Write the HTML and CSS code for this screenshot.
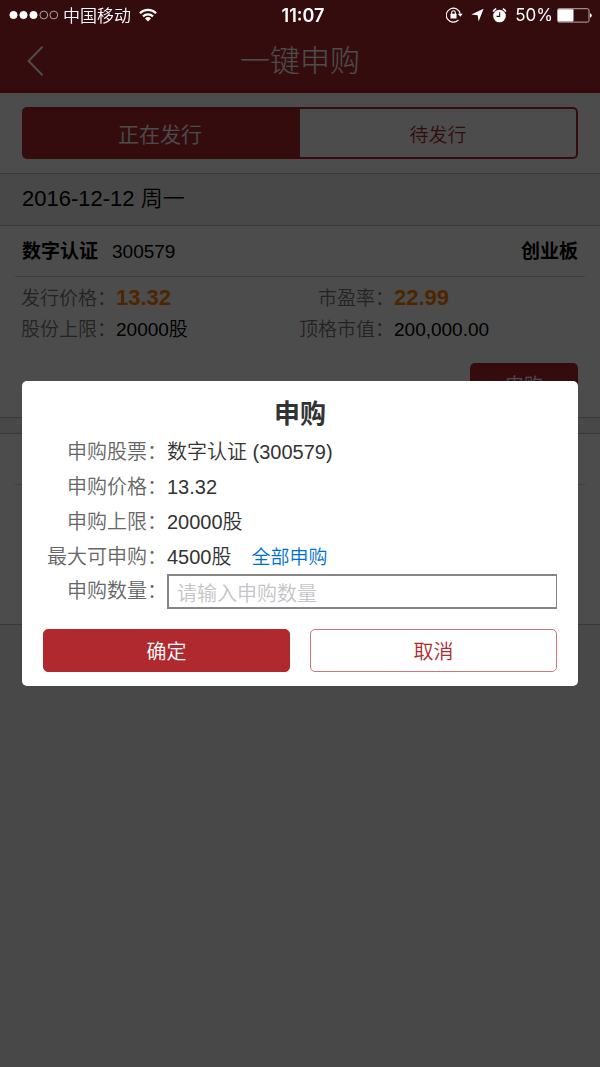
FILE: index.html
```html
<!DOCTYPE html>
<html lang="zh-CN">
  <head>
    <meta charset="UTF-8" />
    <meta name="viewport" content="width=device-width, initial-scale=1.0" />
    <title>一键申购</title>
    <link rel="stylesheet" href="styles.css">
  </head>
  <body>
    <header class="header">
      <div class="status-bar">
        <div class="status-left">
          <svg width="50" height="10" viewBox="0 0 50 10" fill="#fff" stroke="#fff">
            <circle cx="5.5" cy="5" r="3.6" />
            <circle cx="15.5" cy="5" r="3.6" />
            <circle cx="25.5" cy="5" r="3.6" />
            <circle cx="35.8" cy="5" r="3.9" fill="none" stroke-width=".6" />
            <circle cx="45.8" cy="5" r="3.9" fill="none" stroke-width=".6" />
          </svg>
          <span class="carrier">中国移动</span>
          <svg width="18" height="14" viewBox="0 0 18 14" fill="none" stroke="#fff" stroke-width="2.2">
            <path d="M.9 5.2a11.5 11.5 0 0 1 16.2 0" />
            <path d="M4 8.4a7.1 7.1 0 0 1 10 0" />
            <path d="M9 13.4L6 10.5a4.3 4.3 0 0 1 6 0z" fill="#fff" stroke="none" />
          </svg>
        </div>
        <span class="time">11:07</span>
        <div class="status-right">
          <svg width="17" height="16" viewBox="0 0 17 16" fill="none" stroke="#fff">
            <path d="M12.5 12.8A7 7 0 1 1 14.2 7" stroke-width="1.1" />
            <path d="M11.8 6.8h4.9l-2.4 3z" fill="#fff" stroke="none" />
            <rect x="4.5" y="6.8" width="6" height="4.8" rx=".5" fill="#fff" stroke="none" />
            <path d="M5.7 7V5.6a1.8 1.8 0 0 1 3.6 0V7" stroke-width="1.1" />
          </svg>
          <svg width="13" height="14" viewBox="0 0 13 14" fill="#fff">
            <path d="M12.6.8L7.6 13.4 6.7 7.2.3 6.5z" />
          </svg>
          <svg width="15" height="15" viewBox="0 0 14 15" fill="none" stroke="#fff">
            <circle cx="7" cy="8" r="6.3" fill="#fff" stroke="none" />
            <path d="M.7 3.6A5 5 0 0 1 3.7.8M13.3 3.6A5 5 0 0 0 10.3.8" stroke-width="1.6" />
            <path d="M7.2 4.2v4.2H4" stroke="#350c0e" stroke-width="1.1" />
          </svg>
          <span class="percent">50%</span>
          <svg width="35" height="15" viewBox="0 0 35 15">
            <rect x=".5" y=".7" width="31.5" height="13.4" rx="1.5" fill="none" stroke="#b9a9aa" />
            <rect x="1" y="1.2" width="15.5" height="12.4" rx="1" fill="#fff" />
            <path d="M33 5.2a2.4 2.4 0 0 1 0 4.6z" fill="#fff" />
          </svg>
        </div>
      </div>
      <div class="nav">
        <button class="back" aria-label="返回">
          <svg width="18" height="30" viewBox="0 0 18 30" fill="none" stroke="#fff" stroke-width="2">
            <path d="M15.5 .8L1.6 15l13.9 14.2" />
          </svg>
        </button>
        <h1>一键申购</h1>
      </div>
    </header>

    <main>
      <div class="tabs">
        <button class="tab active">正在发行</button>
        <button class="tab">待发行</button>
      </div>

      <h2 class="date">2016-12-12 周一</h2>

      <section class="card">
        <div class="card-head">
          <strong>数字认证</strong>
          <span>300579</span>
          <strong class="board">创业板</strong>
        </div>
        <dl class="info">
          <div><dt>发行价格：</dt><dd class="price">13.32</dd></div>
          <div><dt>市盈率：</dt><dd class="price">22.99</dd></div>
          <div><dt>股份上限：</dt><dd>20000股</dd></div>
          <div><dt>顶格市值：</dt><dd>200,000.00</dd></div>
        </dl>
        <button class="apply">申购</button>
      </section>

      <section class="card card-next">
        <div class="card-head"></div>
      </section>
    </main>

    <div class="overlay">
      <form class="modal" role="dialog" aria-labelledby="modal-title">
        <h2 id="modal-title">申购</h2>
        <div class="row">
          <span class="label">申购股票：</span>
          <span>数字认证 (300579)</span>
        </div>
        <div class="row">
          <span class="label">申购价格：</span>
          <span>13.32</span>
        </div>
        <div class="row">
          <span class="label">申购上限：</span>
          <span>20000股</span>
        </div>
        <div class="row">
          <span class="label">最大可申购：</span>
          <span>4500股</span>
          <a class="all" href="#">全部申购</a>
        </div>
        <div class="row input-row">
          <label class="label" for="amount">申购数量：</label>
          <input id="amount" type="text" placeholder="请输入申购数量">
        </div>
        <div class="actions">
          <button type="button" class="confirm">确定</button>
          <button type="button" class="cancel">取消</button>
        </div>
      </form>
    </div>
  </body>
</html>
```
FILE: styles.css
```css
* {
  box-sizing: border-box;
  margin: 0;
  padding: 0;
}

body {
  min-height: 100vh;
  background-color: #f0f0f0;
  color: #000;
  font-family: "Liberation Sans", "Noto Sans CJK SC", sans-serif;
  font-size: 19px;
  font-weight: 350;
}

button,
input {
  font: inherit;
}

button {
  cursor: pointer;
}

svg {
  display: block;
}

.header {
  background-color: #b0292e;
  color: #fff;
}

/* the status bar stays bright above the overlay */
.status-bar {
  position: relative;
  z-index: 20;
  display: grid;
  grid-template-columns: 1fr auto 1fr;
  align-items: center;
  height: 30px;
  padding: 0 8px;
  font-family: Inter, "Noto Sans CJK SC", sans-serif;
  font-size: 17px;
}

.status-left,
.status-right {
  display: flex;
  align-items: center;
}

.status-left {
  gap: 6px;
}

.status-right {
  justify-content: flex-end;
  gap: 8px;
}

.carrier {
  font-family: "Noto Sans CJK SC", sans-serif;
  line-height: 28px;
  margin: 0 2px 0 -1px;
}

.percent {
  font-weight: 400;
  margin-right: -4px;
}

.time {
  padding-left: 6px;
  font-size: 18px;
  font-weight: 600;
}

.nav {
  display: grid;
  grid-template-columns: 60px 1fr 60px;
  align-items: center;
  height: 63px;
  padding-bottom: 2px;
}

.nav h1 {
  text-align: center;
  font-size: 30px;
  font-weight: 300;
  line-height: 40px;
}

.back {
  padding-left: 27px;
  background: none;
  border: none;
}

.tabs {
  display: flex;
  padding: 14px 22px;
  background-color: #fff;
}

.tab {
  flex: 1;
  height: 52px;
  background-color: #fff;
  border: 2px solid #b0292e;
  border-left: none;
  border-radius: 0 5px 5px 0;
  color: #b0292e;
}

.tab.active {
  background-color: #b0292e;
  border-radius: 5px 0 0 5px;
  color: #fff;
  font-size: 21px;
}

.date {
  padding: 0 22px 2px;
  border-top: 1px solid #bbb;
  font-size: 22px;
  font-weight: 350;
  line-height: 49px;
}

.card {
  padding: 0 15px 12px;
  background-color: #fff;
  border-top: 1px solid #bbb;
  border-bottom: 1px solid #bbb;
}

.card-head {
  display: flex;
  align-items: baseline;
  gap: 14px;
  height: 51px;
  padding: 0 7px;
  border-bottom: 1px solid #ccc;
  line-height: 52px;
}

.board {
  margin-left: auto;
}

.info {
  display: grid;
  grid-template-columns: 1fr 1fr;
  padding: 5px 7px 0;
}

.info div {
  display: flex;
  align-items: baseline;
  height: 32px;
  line-height: 32px;
}

.info dt {
  width: 94px;
  display: flex;
  justify-content: flex-end;
  white-space: nowrap;
  color: #777;
}

.info .price {
  color: #ff8000;
  font-size: 22px;
  font-weight: bold;
}

.apply {
  display: block;
  width: 108px;
  height: 42px;
  margin: 17px 7px 0 auto;
  padding-bottom: 2px;
  background-color: #b0292e;
  border: none;
  border-radius: 5px;
  color: #fff;
}

.card-next {
  min-height: 192px;
  margin-top: 15px;
}

.overlay {
  position: fixed;
  inset: 0;
  z-index: 10;
  display: flex;
  align-items: center;
  padding: 0 22px;
  background-color: rgba(0, 0, 0, 0.7);
}

.modal {
  flex: 1;
  padding: 14px 21px;
  background-color: #fff;
  border-radius: 5px;
  color: #333;
  font-size: 20px;
}

.modal h2 {
  text-align: center;
  font-size: 26px;
  line-height: 38px;
}

.row {
  display: flex;
  align-items: baseline;
  height: 35px;
  line-height: 38px;
}

.label {
  width: 124px;
  text-align: right;
  color: #666;
}

.all {
  margin-left: 20px;
  color: #0070d0;
  font-size: 19px;
  text-decoration: none;
}

.input-row {
  align-items: flex-end;
  height: 36px;
  line-height: 35px;
}

.row input {
  flex: 1;
  min-width: 0;
  height: 35px;
  padding: 2px 8px 0;
  border: 2px solid #858585;
  border-right-width: 1px;
  border-radius: 0;
  background-color: #fff;
  color: #333;
  font-family: "Noto Sans CJK SC", sans-serif;
}

.row input::placeholder {
  color: #c4c4c9;
}

.actions {
  display: flex;
  gap: 20px;
  margin-top: 20px;
}

.actions button {
  flex: 1;
  height: 43px;
  border: 1px solid #b0292e;
  border-radius: 5px;
}

.actions .confirm {
  background-color: #b0292e;
  color: #fff;
}

.actions .cancel {
  background-color: #fff;
  border-color: #d0757a;
  color: #b0292e;
}
```
